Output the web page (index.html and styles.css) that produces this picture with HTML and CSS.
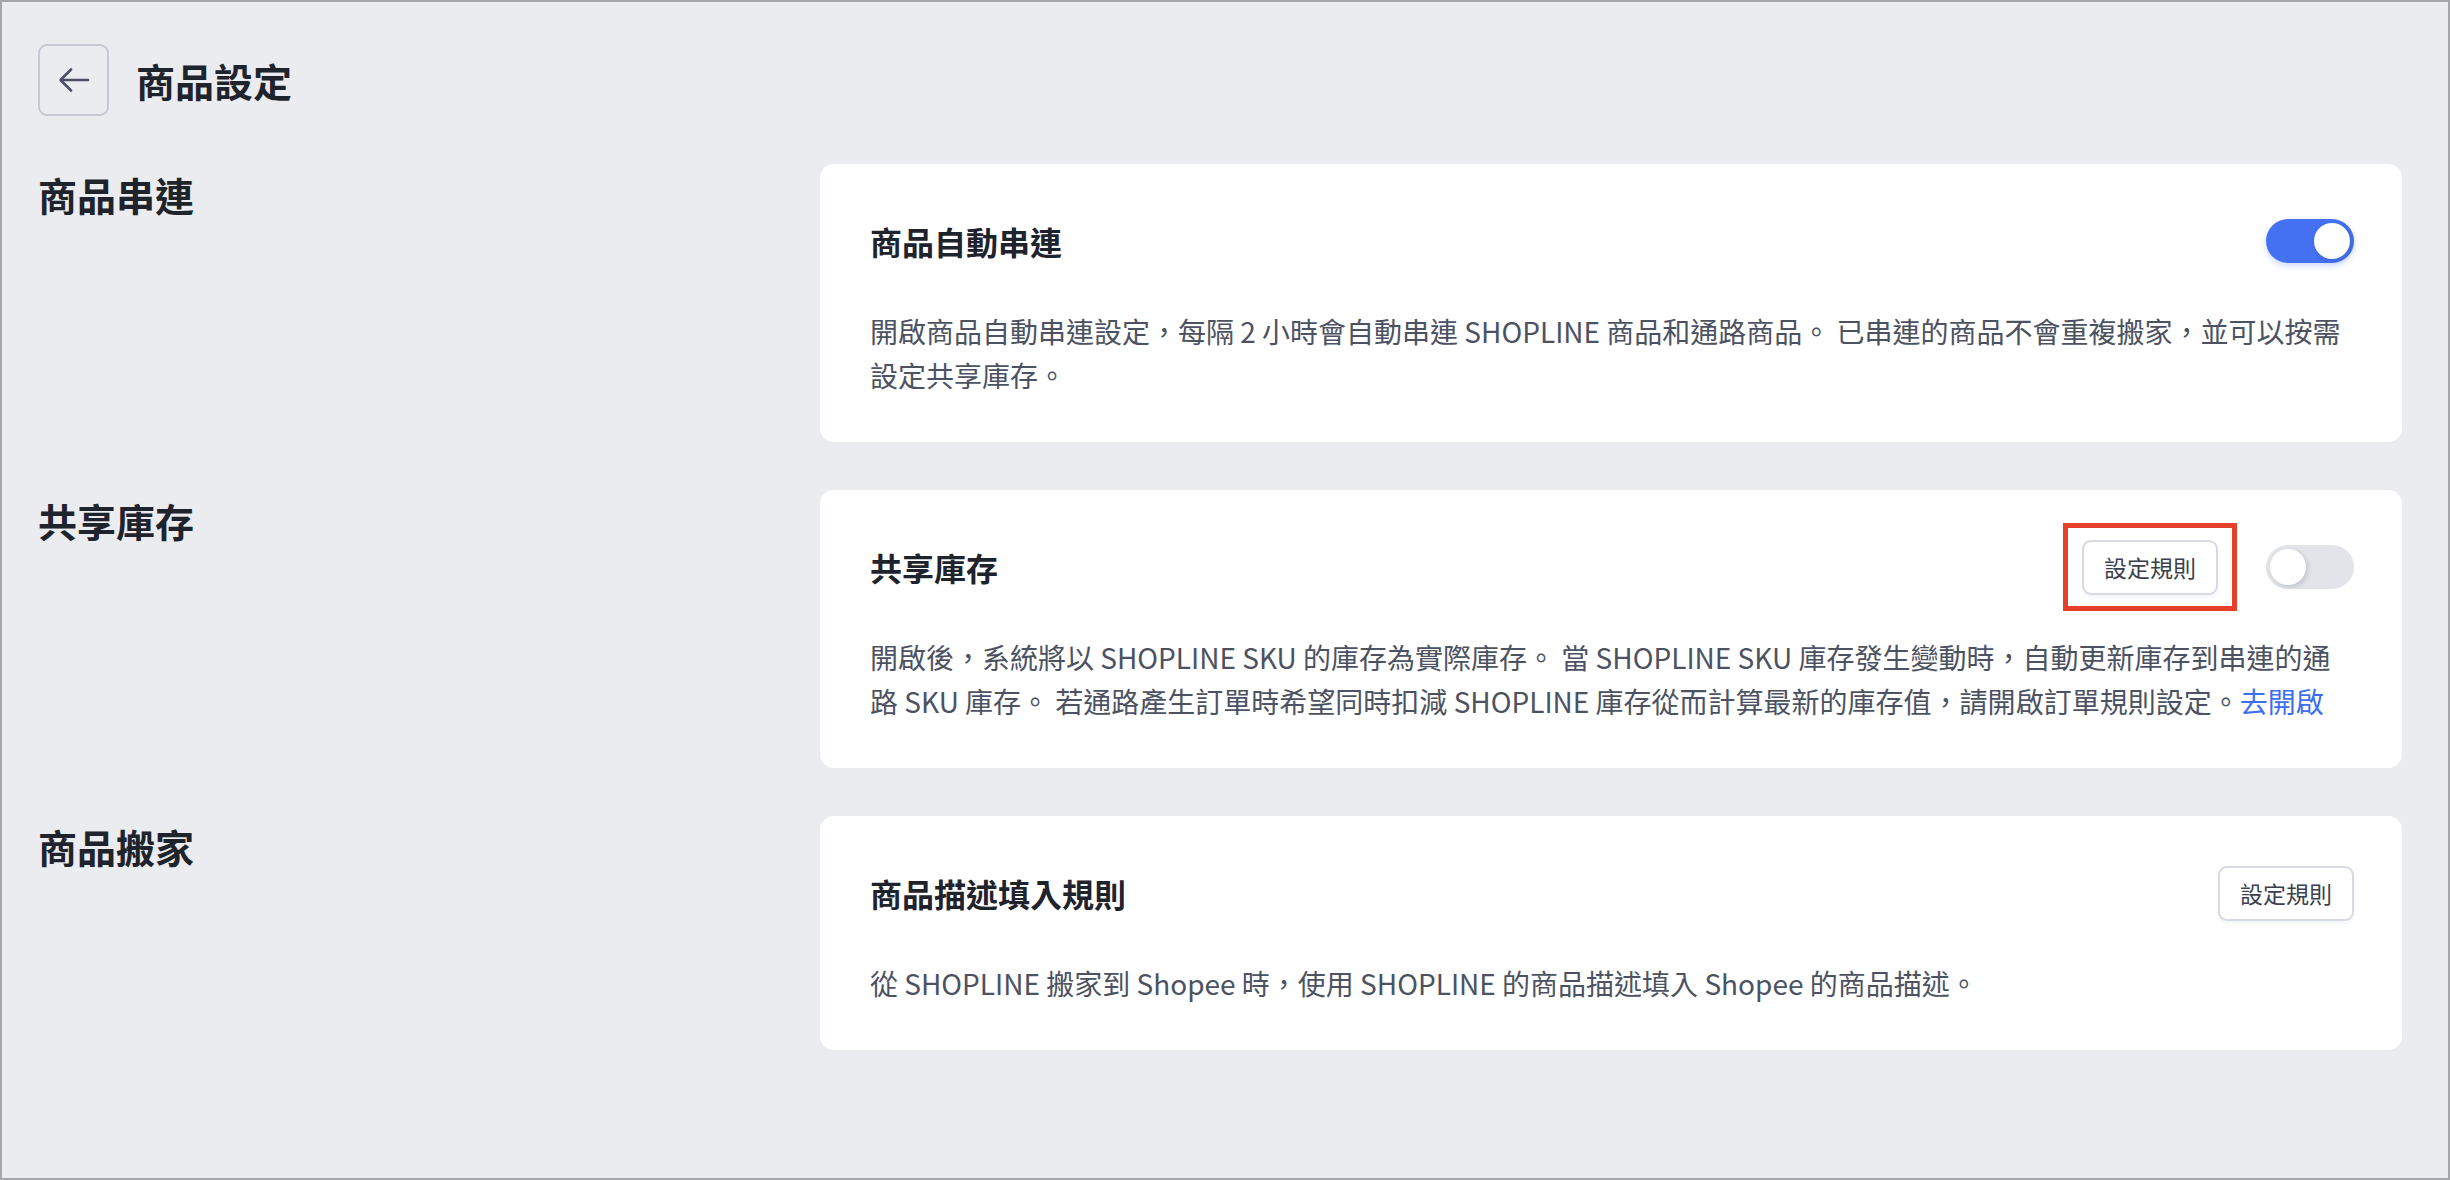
FILE: index.html
```html
<!DOCTYPE html>
<html lang="zh-TW">
<head>
    <meta charset="UTF-8">
    <title>商品設定</title>
    <link rel="stylesheet" href="styles.css">
</head>
<body>
<div class="page">
    <!-- 頁首：返回 + 標題 -->
    <div class="page-header">
        <button class="back-btn" type="button">
            <svg width="34" height="28" viewBox="0 0 34 28" fill="none">
                <path d="M31 14H4M14 3.5L3.5 14L14 24.5" stroke="#4b5162" stroke-width="2.6" stroke-linecap="round" stroke-linejoin="round"/>
            </svg>
        </button>
        <h1 class="page-title">商品設定</h1>
    </div>

    <div class="sections">
        <div class="section">
            <h2 class="section-label">商品串連</h2>
            <div class="card">
                <div class="card-head">
                    <div class="card-title">商品自動串連</div>
                    <div class="switch on"><span class="knob"></span></div>
                </div>
                <p class="card-desc">開啟商品自動串連設定，每隔 2 小時會自動串連 SHOPLINE 商品和通路商品。 已串連的商品不會重複搬家，並可以按需設定共享庫存。</p>
            </div>
        </div>

        <div class="section">
            <h2 class="section-label">共享庫存</h2>
            <div class="card">
                <div class="card-head">
                    <div class="card-title">共享庫存</div>
                    <span class="marked"><button class="rule-btn" type="button">設定規則</button></span>
                    <div class="switch"><span class="knob"></span></div>
                </div>
                <p class="card-desc">開啟後，系統將以 SHOPLINE SKU 的庫存為實際庫存。 當 SHOPLINE SKU 庫存發生變動時，自動更新庫存到串連的通路 SKU 庫存。 若通路產生訂單時希望同時扣減 SHOPLINE 庫存從而計算最新的庫存值，請開啟訂單規則設定。<a class="link" href="#">去開啟</a></p>
            </div>
        </div>

        <div class="section">
            <h2 class="section-label">商品搬家</h2>
            <div class="card">
                <div class="card-head">
                    <div class="card-title">商品描述填入規則</div>
                    <button class="rule-btn" type="button">設定規則</button>
                </div>
                <p class="card-desc">從 SHOPLINE 搬家到 Shopee 時，使用 SHOPLINE 的商品描述填入 Shopee 的商品描述。</p>
            </div>
        </div>
    </div>
</div>
</body>
</html>
```

FILE: styles.css
```css
* {
    box-sizing: border-box;
}

body {
    margin: 0;
    height: 100vh;
    background: #ebecf0;
    border: 2px solid #a4a5aa;
    font-family: "Noto Sans CJK TC", "Noto Sans", sans-serif;
    color: #1f232c;
    overflow: hidden;
}

.page {
    padding: 42px 46px 0 36px;
}

/* 頁首 */
.page-header {
    display: flex;
    align-items: center;
    gap: 27px;
    height: 72px;
}

.back-btn {
    width: 71px;
    height: 72px;
    border: 2px solid #c5c9d3;
    border-radius: 9px;
    background: transparent;
    display: flex;
    align-items: center;
    justify-content: center;
    padding: 0;
    cursor: pointer;
}

.page-title {
    margin: 0;
    font-size: 39px;
    font-weight: 700;
    line-height: 1;
}

/* 區塊 */
.sections {
    margin-top: 48px;
}

.section {
    display: grid;
    grid-template-columns: 782px 1fr;
    margin-bottom: 48px;
}

.section-label {
    margin: 0;
    font-size: 39px;
    font-weight: 700;
    line-height: 60px;
}

.card {
    background: #fff;
    border-radius: 14px;
    padding: 49px 48px 45px 50px;
}

.card-head {
    display: flex;
    align-items: center;
    gap: 48px;
    min-height: 56px;
}

.card-title {
    flex: 1;
    font-size: 32px;
    font-weight: 700;
}

.card-desc {
    margin: 40px 0 0;
    font-size: 28px;
    line-height: 44px;
    color: #4c5262;
}

.link {
    color: #3d6ef2;
    text-decoration: none;
}

/* 按鈕 */
.rule-btn {
    height: 55px;
    padding: 0 20px;
    border: 2px solid #d7dae3;
    border-radius: 9px;
    background: #fff;
    font-family: inherit;
    font-size: 23px;
    color: #3b404c;
    box-shadow: 0 3px 3px rgba(30, 40, 70, 0.04);
    cursor: pointer;
}

/* 標記框 */
.marked {
    position: relative;
    display: flex;
}

.marked::after {
    content: '';
    position: absolute;
    top: -17px;
    bottom: -16px;
    left: -19px;
    right: -19px;
    border: 5px solid #e6402a;
    pointer-events: none;
}

/* 開關 */
.switch {
    position: relative;
    width: 88px;
    height: 44px;
    border-radius: 22px;
    background: #e2e4e9;
    flex-shrink: 0;
}

.switch .knob {
    position: absolute;
    top: 4px;
    left: 4px;
    width: 36px;
    height: 36px;
    border-radius: 50%;
    background: #fff;
    box-shadow: 2px 2px 5px rgba(40, 50, 80, 0.18);
}

.switch.on {
    background: #4470f2;
    box-shadow: 0 3px 6px rgba(68, 112, 242, 0.25);
}

.switch.on .knob {
    left: 48px;
}
```
